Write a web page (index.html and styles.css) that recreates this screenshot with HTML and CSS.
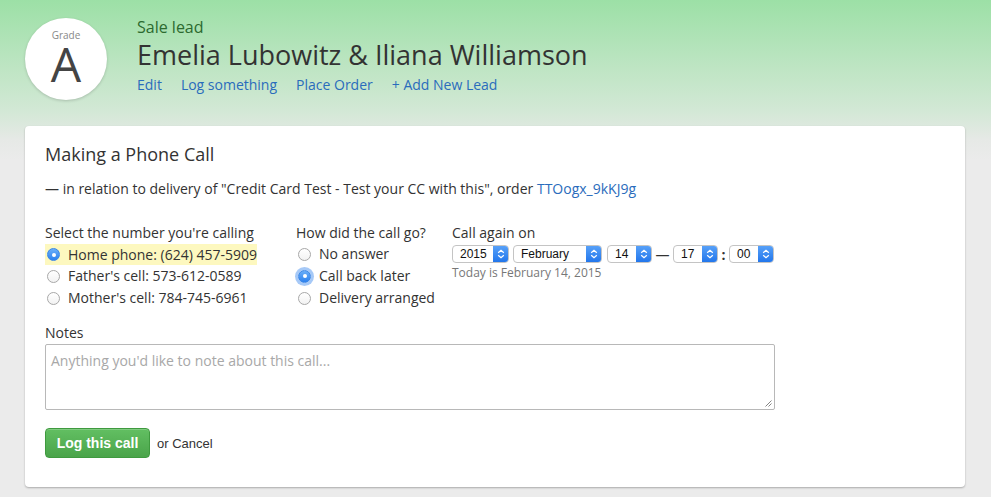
FILE: index.html
```html
<!DOCTYPE html>
<html>
<head>
<meta charset="utf-8">
<link rel="stylesheet" href="styles.css">
</head>
<body>
<header class="header">
  <div class="grade">
    <span class="grade-label">Grade</span>
    <span class="grade-letter">A</span>
  </div>
  <div class="lead">
    <div class="lead-type">Sale lead</div>
    <h1 class="lead-name">Emelia Lubowitz &amp; Iliana Williamson</h1>
    <nav class="lead-links">
      <a href="#">Edit</a>
      <a href="#">Log something</a>
      <a href="#">Place Order</a>
      <a href="#">+ Add New Lead</a>
    </nav>
  </div>
</header>

<main class="card">
  <h2 class="card-title">Making a Phone Call</h2>
  <p class="relation">— in relation to delivery of "Credit Card Test - Test your CC with this", order <a href="#">TTOogx_9kKJ9g</a></p>

  <div class="columns">
    <div class="col col-number">
      <div class="col-label">Select the number you're calling</div>
      <label class="opt opt-hl"><span class="radio checked"></span>Home phone: (624) 457-5909</label>
      <label class="opt"><span class="radio"></span>Father's cell: 573-612-0589</label>
      <label class="opt"><span class="radio"></span>Mother's cell: 784-745-6961</label>
    </div>
    <div class="col col-result">
      <div class="col-label">How did the call go?</div>
      <label class="opt"><span class="radio"></span>No answer</label>
      <label class="opt"><span class="radio checked focus"></span>Call back later</label>
      <label class="opt"><span class="radio"></span>Delivery arranged</label>
    </div>
    <div class="col col-again">
      <div class="col-label">Call again on</div>
      <div class="selects">
        <span class="sel sel-year"><span class="sel-val">2015</span><span class="sel-arrow"><svg width="8" height="10" viewBox="0 0 8 10"><path d="M1.2 3.8 4 1.2 6.8 3.8M1.2 6.2 4 8.8 6.8 6.2" fill="none" stroke="#fff" stroke-width="1.2"/></svg></span></span>
        <span class="sel sel-month"><span class="sel-val">February</span><span class="sel-arrow"><svg width="8" height="10" viewBox="0 0 8 10"><path d="M1.2 3.8 4 1.2 6.8 3.8M1.2 6.2 4 8.8 6.8 6.2" fill="none" stroke="#fff" stroke-width="1.2"/></svg></span></span>
        <span class="sel sel-small"><span class="sel-val">14</span><span class="sel-arrow"><svg width="8" height="10" viewBox="0 0 8 10"><path d="M1.2 3.8 4 1.2 6.8 3.8M1.2 6.2 4 8.8 6.8 6.2" fill="none" stroke="#fff" stroke-width="1.2"/></svg></span></span>
        <span class="sep sep-dash">—</span>
        <span class="sel sel-small"><span class="sel-val">17</span><span class="sel-arrow"><svg width="8" height="10" viewBox="0 0 8 10"><path d="M1.2 3.8 4 1.2 6.8 3.8M1.2 6.2 4 8.8 6.8 6.2" fill="none" stroke="#fff" stroke-width="1.2"/></svg></span></span>
        <span class="sep sep-colon">:</span>
        <span class="sel sel-small"><span class="sel-val">00</span><span class="sel-arrow"><svg width="8" height="10" viewBox="0 0 8 10"><path d="M1.2 3.8 4 1.2 6.8 3.8M1.2 6.2 4 8.8 6.8 6.2" fill="none" stroke="#fff" stroke-width="1.2"/></svg></span></span>
      </div>
      <div class="today">Today is February 14, 2015</div>
    </div>
  </div>

  <div class="notes-label">Notes</div>
  <div class="notes">
    <span class="placeholder">Anything you'd like to note about this call...</span>
    <svg class="grip" width="7" height="7" viewBox="0 0 7 7"><path d="M6.5 0.5 0.5 6.5M6.5 3.5 3.5 6.5" stroke="#777" stroke-width="0.9" fill="none"/></svg>
  </div>

  <div class="actions">
    <button class="btn-log" type="button">Log this call</button>
    <span class="or">or <a href="#">Cancel</a></span>
  </div>
</main>
</body>
</html>
```

FILE: styles.css
```css
html, body {
  margin: 0;
  padding: 0;
}

body {
  font-family: "Open Sans", "Noto Sans", sans-serif;
  color: #333;
  background: linear-gradient(180deg, #9ce0a6 0px, #b8e4be 55px, #d2e8d5 110px, #e6e9e6 140px, #ebebeb 160px) no-repeat, #ebebeb;
  min-height: 497px;
  overflow: hidden;
}

a {
  color: #2a6cbc;
  text-decoration: none;
}

/* Header */
.header {
  display: flex;
  gap: 30px;
  padding: 18px 25px 0 25px;
  height: 126px;
  box-sizing: border-box;
}

.grade {
  width: 82px;
  height: 82px;
  border-radius: 50%;
  background: #fff;
  box-shadow: 0 1px 3px rgba(0, 0, 0, 0.18);
  display: flex;
  flex-direction: column;
  align-items: center;
  flex-shrink: 0;
}

.grade-label {
  font-size: 10px;
  color: #888;
  line-height: 12px;
  margin-top: 11px;
}

.grade-letter {
  font-size: 48px;
  line-height: 40px;
  height: 40px;
  color: #444;
  margin-top: 3px;
}

.lead {
  display: flex;
  flex-direction: column;
}

.lead-type {
  font-size: 16px;
  line-height: 18px;
  color: #2c6a2f;
}

.lead-name {
  margin: 2px 0 0 0;
  font-size: 27px;
  font-weight: normal;
  line-height: 34px;
  color: #333;
}

.lead-links {
  display: flex;
  gap: 19px;
  font-size: 14px;
  line-height: 20px;
  margin-top: 3px;
}

.lead-links a {
  color: #2a6cbc;
}

/* Card */
.card {
  display: block;
  margin: 0 26px 0 25px;
  background: #fff;
  border-radius: 4px;
  box-shadow: 0 1px 2px rgba(0, 0, 0, 0.28);
  padding: 16px 20px 29px 20px;
}

.card-title {
  margin: 0;
  font-size: 18px;
  font-weight: normal;
  line-height: 24px;
  color: #333;
}

.relation {
  margin: 13px 0 0 0;
  font-size: 14px;
  line-height: 20px;
  color: #333;
}

.relation a {
  color: #2a6cbc;
}

.columns {
  display: flex;
  margin-top: 23px;
  font-size: 14px;
}

.col-number {
  width: 251px;
}

.col-result {
  width: 156px;
}

.col-label {
  line-height: 21px;
  color: #333;
}

.opt {
  display: flex;
  align-items: center;
  height: 22px;
  line-height: 22px;
  color: #333;
  white-space: nowrap;
}

.opt-hl {
  background: #fdf8bf;
  width: 212px;
  margin-top: 1px;
  height: 21px;
}

.radio {
  width: 13px;
  height: 13px;
  box-sizing: border-box;
  border-radius: 50%;
  border: 1px solid #a8a8a8;
  background: linear-gradient(#ffffff, #f2f2f2);
  margin: 0 8px 0 2px;
  flex-shrink: 0;
  position: relative;
}

.radio.checked {
  border-color: #3a86e6;
  background: linear-gradient(#6aaef8, #2d82ef);
}

.radio.checked::after {
  content: "";
  position: absolute;
  width: 4px;
  height: 4px;
  border-radius: 50%;
  background: #fff;
  left: 3.5px;
  top: 3.5px;
}

.radio.focus {
  box-shadow: 0 0 0 3px rgba(92, 156, 240, 0.55);
}

.selects {
  display: flex;
  align-items: center;
  margin-top: 2px;
  height: 18px;
  font-family: "Liberation Sans", Arial, sans-serif;
  font-size: 12px;
}

.sel {
  display: flex;
  height: 18px;
  box-sizing: border-box;
  border: 1px solid #c4c4c4;
  border-radius: 4px;
  background: #fff;
  overflow: hidden;
  margin-right: 4px;
}

.sel-val {
  flex: 1;
  padding-left: 7px;
  line-height: 16px;
  color: #111;
}

.sel-arrow {
  width: 16px;
  background: linear-gradient(#5aa3f9, #1f74eb);
  display: flex;
  align-items: center;
  justify-content: center;
  margin: -1px -1px -1px 0;
}

.sel-year { width: 57px; }
.sel-month { width: 89px; margin-right: 5px; }
.sel-small { width: 45px; margin-right: 0; }

.sep {
  font-family: "Open Sans", sans-serif;
  color: #333;
  text-align: center;
}

.sep-dash {
  width: 21px;
  font-size: 14px;
}

.sep-colon {
  width: 11px;
  font-size: 14px;
  font-weight: bold;
}

.today {
  margin-top: 2px;
  font-size: 12px;
  line-height: 16px;
  color: #777;
}

.notes-label {
  margin-top: 14px;
  font-size: 14px;
  line-height: 20px;
  color: #333;
}

.notes {
  position: relative;
  margin-top: 1px;
  width: 730px;
  height: 66px;
  box-sizing: border-box;
  border: 1px solid #b8b8b8;
  border-radius: 2px;
  padding: 4px 5px;
}

.placeholder {
  font-size: 14px;
  line-height: 20px;
  color: #a8a8a8;
}

.grip {
  position: absolute;
  right: 2px;
  bottom: 2px;
}

.actions {
  display: flex;
  align-items: center;
  margin-top: 18px;
}

.btn-log {
  width: 105px;
  height: 30px;
  border: 1px solid #3f9a3f;
  border-radius: 4px;
  background: linear-gradient(#62bf62, #4aa44a);
  color: #fff;
  font-family: "Liberation Sans", Arial, sans-serif;
  font-weight: bold;
  font-size: 14px;
  padding: 0;
  box-shadow: inset 0 1px 0 rgba(255, 255, 255, 0.2);
}

.or {
  margin-left: 7px;
  font-family: "Liberation Sans", Arial, sans-serif;
  font-size: 13px;
  color: #333;
}

.or a {
  color: #333;
}
```
